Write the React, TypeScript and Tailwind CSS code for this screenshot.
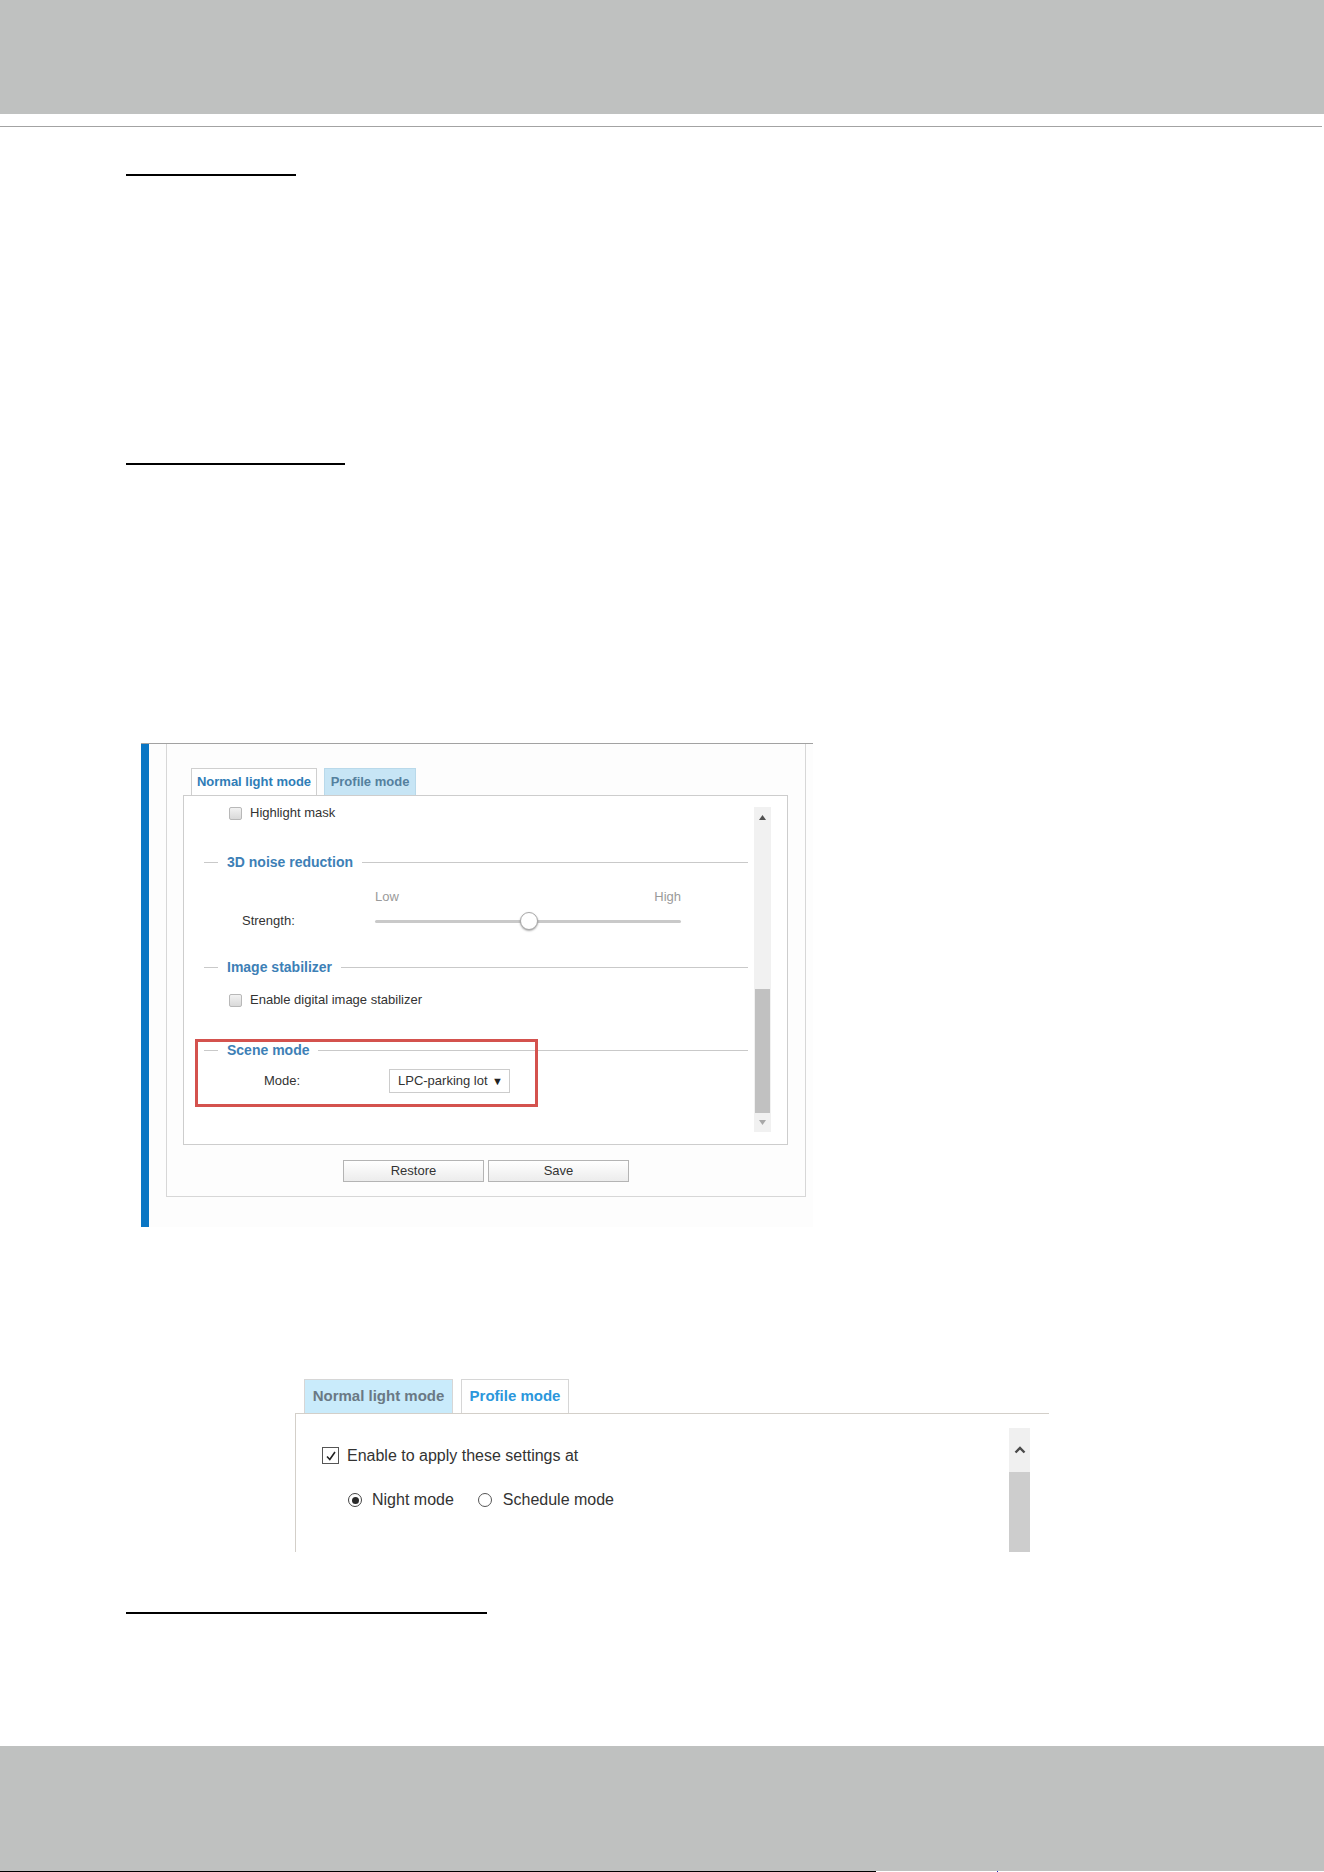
import React from "react";

function Legend({ title }: { title: string }) {
  return (
    <div className="flex h-[20px] items-center pl-[20px]">
      <div className="h-px w-[14px] bg-[#c9c9c9]" />
      <span className="px-[9px] text-[14px] font-bold leading-none text-[#3d80b6]">{title}</span>
      <div className="h-px flex-1 bg-[#c9c9c9]" />
    </div>
  );
}

function GrayBox() {
  return (
    <span className="block h-[13px] w-[13px] rounded-[2px] border border-[#b8b8b8] bg-linear-to-b from-[#f2f2f2] to-[#d9d9d9]" />
  );
}

function ImageSettingsPanel() {
  return (
    <div className="ml-[141px] mt-[278px] flex h-[484px] w-[672px] border-t border-[#a2a2a2] bg-[#fdfdfd]">
      <div className="w-[8px] bg-[#0a76c4]" />
      <div className="ml-[17px] flex h-[453px] w-[640px] flex-col border-x border-b border-[#d7d7d7]">
        {/* tabs */}
        <div className="ml-[24px] mt-[24px] flex h-[27px] gap-[7px]">
          <div className="flex w-[126px] items-center justify-center border border-b-0 border-[#cfcfcf] bg-white text-[13px] font-bold text-[#2f7db7]">
            Normal light mode
          </div>
          <div className="flex w-[92px] items-center justify-center border border-b-0 border-[#b9d9ea] bg-[#c7e5f5] text-[13px] font-bold text-[#54809e]">
            Profile mode
          </div>
        </div>
        {/* scrolling settings box */}
        <div className="ml-[16px] flex h-[350px] w-[605px] border border-[#cdcdcd] bg-white">
          <div className="relative w-[564px] pt-[7px] text-[13px] text-[#333]">
            <div className="flex h-[20px] items-center gap-[8px] pl-[45px]">
              <GrayBox />
              <span>Highlight mask</span>
            </div>

            <div className="mt-[29px]">
              <Legend title="3D noise reduction" />
            </div>

            <div className="mt-[17px] flex h-[16px] w-[497px] items-center justify-between pl-[191px] text-[#9a9a9a]">
              <span>Low</span>
              <span>High</span>
            </div>

            <div className="mt-[6px] flex h-[20px] items-center">
              <span className="w-[191px] pl-[58px]">Strength:</span>
              <div className="relative h-[20px] w-[306px]">
                <div className="absolute left-0 right-0 top-[9px] h-[3px] rounded-full bg-[#c9c9c9]" />
                <div className="absolute left-[145px] top-[1px] h-[18px] w-[18px] rounded-full border border-[#a9a9a9] bg-white shadow-[0_1px_2px_rgba(0,0,0,0.35)]" />
              </div>
            </div>

            <div className="mt-[26px]">
              <Legend title="Image stabilizer" />
            </div>

            <div className="mt-[13px] flex h-[20px] items-center gap-[8px] pl-[45px]">
              <GrayBox />
              <span>Enable digital image stabilizer</span>
            </div>

            <div className="mt-[30px]">
              <Legend title="Scene mode" />
            </div>

            <div className="mt-[9px] flex h-[24px] items-center">
              <span className="w-[205px] pl-[80px]">Mode:</span>
              <div className="flex h-[24px] w-[121px] items-center justify-between border border-[#cccccc] bg-white pl-[8px] pr-[6px]">
                <span>LPC-parking lot</span>
                <span className="text-[11px] text-[#222]">▼</span>
              </div>
            </div>

            {/* highlight around the scene mode group */}
            <div className="pointer-events-none absolute left-[11px] top-[243px] h-[68px] w-[343px] border-[3px] border-[#d4524e]" />
          </div>

          {/* scrollbar */}
          <div className="ml-[6px] mt-[11px] flex h-[325px] w-[17px] flex-col bg-[#f1f1f1]">
            <div className="flex h-[20px] items-center justify-center">
              <svg width="7" height="5" viewBox="0 0 7 5">
                <path d="M3.5 0 L7 5 L0 5 Z" fill="#505050" />
              </svg>
            </div>
            <div className="h-[162px]" />
            <div className="mx-auto h-[124px] w-[15px] bg-[#c1c1c1]" />
            <div className="flex flex-1 items-center justify-center">
              <svg width="7" height="5" viewBox="0 0 7 5">
                <path d="M0 0 L7 0 L3.5 5 Z" fill="#a8a8a8" />
              </svg>
            </div>
          </div>
        </div>

        {/* buttons */}
        <div className="mt-[15px] flex justify-center gap-[4px]">
          <button className="h-[22px] w-[141px] border border-[#b4b4b4] bg-linear-to-b from-white to-[#ececec] text-[13px] text-[#333]">
            Restore
          </button>
          <button className="h-[22px] w-[141px] border border-[#b4b4b4] bg-linear-to-b from-white to-[#ececec] text-[13px] text-[#333]">
            Save
          </button>
        </div>
      </div>
    </div>
  );
}

function ProfilePanel() {
  return (
    <div className="ml-[295px] mt-[152px] w-[754px]">
      <div className="ml-[9px] flex h-[34px] gap-[8px]">
        <div className="flex w-[149px] items-center justify-center border border-b-0 border-[#d6d6d6] bg-[#c9ebfb] text-[15px] font-bold text-[#6a7985]">
          Normal light mode
        </div>
        <div className="flex w-[108px] items-center justify-center border border-b-0 border-[#d6d6d6] bg-white text-[15px] font-bold text-[#2b97dc]">
          Profile mode
        </div>
      </div>
      <div className="flex h-[139px] border-l border-t border-[#d3cfc9]">
        <div className="flex-1 pl-[26px] pt-[33px] text-[16px] text-[#333]">
          <div className="flex h-[17px] items-center gap-[8px]">
            <span className="flex h-[17px] w-[17px] items-center justify-center border border-[#555] bg-white">
              <svg width="12" height="12" viewBox="0 0 12 12">
                <path d="M2 6.5 L4.8 9.5 L10 2" fill="none" stroke="#222" strokeWidth="1.6" />
              </svg>
            </span>
            <span>Enable to apply these settings at</span>
          </div>
          <div className="ml-[26px] mt-[28px] flex h-[16px] items-center">
            <span className="flex h-[14px] w-[14px] items-center justify-center rounded-full border border-[#444] bg-white">
              <span className="h-[7px] w-[7px] rounded-full bg-[#2a2a2a]" />
            </span>
            <span className="ml-[10px]">Night mode</span>
            <span className="ml-[24px] h-[14px] w-[14px] rounded-full border border-[#555] bg-white" />
            <span className="ml-[11px]">Schedule mode</span>
          </div>
        </div>
        <div className="mr-[19px] mt-[14px] flex h-[124px] w-[21px] flex-col">
          <div className="flex h-[44px] items-center justify-center bg-[#f0f0f0]">
            <svg width="12" height="8" viewBox="0 0 12 8">
              <path d="M1.5 6.5 L6 2 L10.5 6.5" fill="none" stroke="#4a4a4a" strokeWidth="2.4" />
            </svg>
          </div>
          <div className="flex-1 bg-[#cdcdcd]" />
        </div>
      </div>
    </div>
  );
}

export default function App() {
  return (
    <div className="w-[1324px] bg-white font-['Liberation_Sans',Arial,sans-serif]">
      <div className="h-[114px] bg-[#bfc1c0]" />
      <div className="mt-[12px] h-px w-[1322px] bg-[#a3a3a3]" />

      <div className="ml-[126px] mt-[47px] h-[2px] w-[170px] bg-black" />
      <div className="ml-[126px] mt-[287px] h-[2px] w-[219px] bg-black" />

      <ImageSettingsPanel />
      <ProfilePanel />

      <div className="ml-[126px] mt-[60px] h-[2px] w-[361px] bg-black" />

      <div className="mt-[132px] h-[125px] bg-[#bfc1c0]" />
      <div className="flex h-px">
        <div className="w-[876px] bg-black" />
        <div className="ml-[121px] w-px bg-[#2020c0]" />
      </div>
    </div>
  );
}
